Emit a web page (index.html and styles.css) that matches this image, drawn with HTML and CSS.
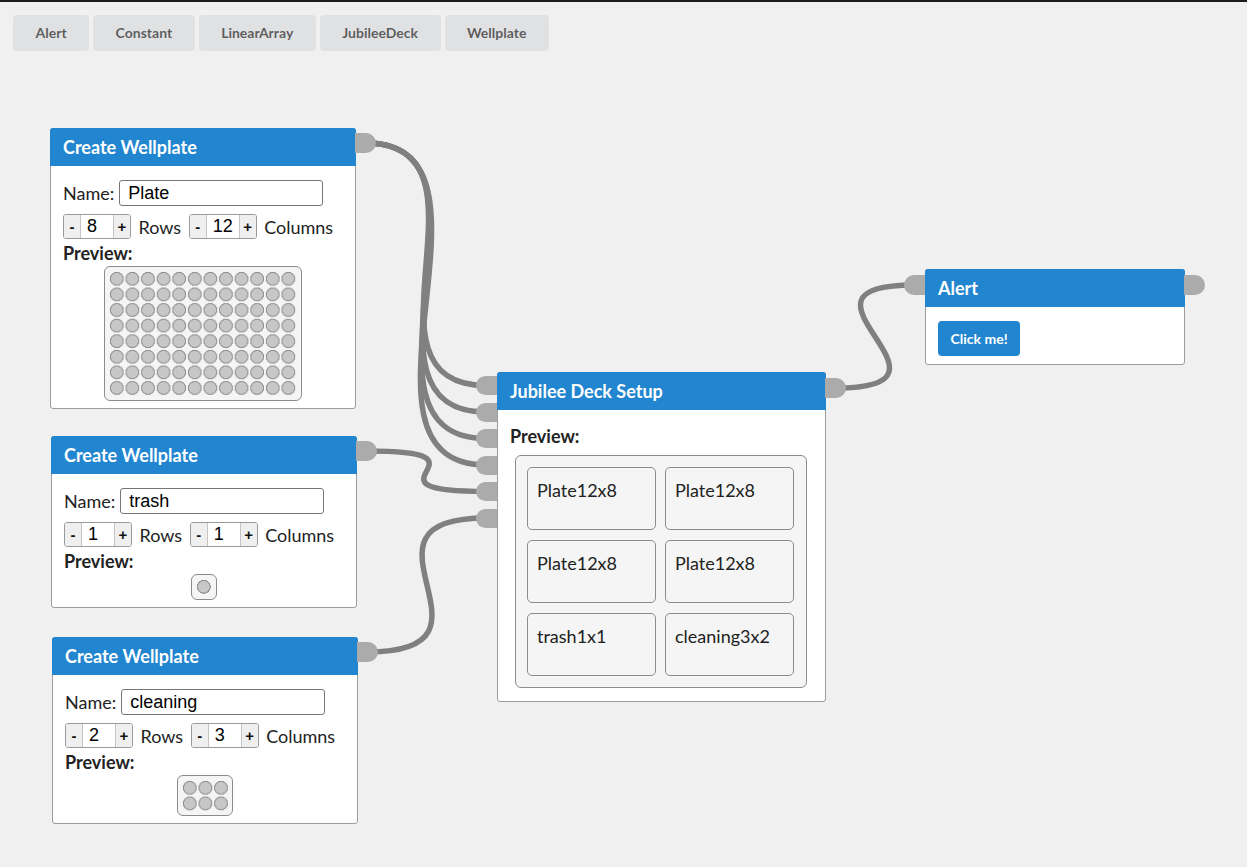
FILE: index.html
```html
<!DOCTYPE html>
<html lang="en">
<head>
<meta charset="utf-8">
<title>Node Editor</title>
<link rel="stylesheet" href="styles.css">
</head>
<body>
<div class="toolbar">
  <span class="tb-btn">Alert</span>
  <span class="tb-btn">Constant</span>
  <span class="tb-btn">LinearArray</span>
  <span class="tb-btn">JubileeDeck</span>
  <span class="tb-btn">Wellplate</span>
</div>

<div class="canvas">
  <svg class="links" width="1247" height="867" viewBox="0 0 1247 867">
    <g fill="none" stroke="#808080" stroke-width="5.5">
      <path d="M366 143 C506 143, 346 385.5, 486 385.5"/>
      <path d="M366 143 C511 143, 341 412, 486 412"/>
      <path d="M366 143 C516 143, 336 438.5, 486 438.5"/>
      <path d="M366 143 C521 143, 331 465, 486 465"/>
      <path d="M367 451 C507 451, 346 491.5, 486 491.5"/>
      <path d="M368 652 C518 652, 336 518, 486 518"/>
      <path d="M836 388 C981 388, 769 285, 914 285"/>
    </g>
  </svg>

  <div class="node wellplate n1">
    <div class="node-head">Create Wellplate</div>
    <div class="node-body">
      <div class="name-row"><span class="lbl">Name:</span><input class="txt" type="text" value="Plate"></div>
      <div class="dim-row">
        <span class="stepper"><span class="step">-</span><span class="val">8</span><span class="step">+</span></span>
        <span class="lbl">Rows</span>
        <span class="stepper"><span class="step">-</span><span class="val">12</span><span class="step">+</span></span>
        <span class="lbl">Columns</span>
      </div>
      <div class="pv-label">Preview:</div>
      <div class="plate-wrap"><div class="plate"><div class="wells w12x8"></div></div></div>
    </div>
    <span class="port out"></span>
  </div>

  <div class="node wellplate n2">
    <div class="node-head">Create Wellplate</div>
    <div class="node-body">
      <div class="name-row"><span class="lbl">Name:</span><input class="txt" type="text" value="trash"></div>
      <div class="dim-row">
        <span class="stepper"><span class="step">-</span><span class="val">1</span><span class="step">+</span></span>
        <span class="lbl">Rows</span>
        <span class="stepper"><span class="step">-</span><span class="val">1</span><span class="step">+</span></span>
        <span class="lbl">Columns</span>
      </div>
      <div class="pv-label">Preview:</div>
      <div class="plate-wrap"><div class="plate"><div class="wells w1x1"></div></div></div>
    </div>
    <span class="port out"></span>
  </div>

  <div class="node wellplate n3">
    <div class="node-head">Create Wellplate</div>
    <div class="node-body">
      <div class="name-row"><span class="lbl">Name:</span><input class="txt" type="text" value="cleaning"></div>
      <div class="dim-row">
        <span class="stepper"><span class="step">-</span><span class="val">2</span><span class="step">+</span></span>
        <span class="lbl">Rows</span>
        <span class="stepper"><span class="step">-</span><span class="val">3</span><span class="step">+</span></span>
        <span class="lbl">Columns</span>
      </div>
      <div class="pv-label">Preview:</div>
      <div class="plate-wrap"><div class="plate"><div class="wells w3x2"></div></div></div>
    </div>
    <span class="port out"></span>
  </div>

  <div class="node deck">
    <div class="node-head">Jubilee Deck Setup</div>
    <div class="node-body">
      <div class="pv-label">Preview:</div>
      <div class="deck-box">
        <div class="slot">Plate12x8</div>
        <div class="slot">Plate12x8</div>
        <div class="slot">Plate12x8</div>
        <div class="slot">Plate12x8</div>
        <div class="slot">trash1x1</div>
        <div class="slot">cleaning3x2</div>
      </div>
    </div>
    <div class="inputs">
      <span class="port in"></span>
      <span class="port in"></span>
      <span class="port in"></span>
      <span class="port in"></span>
      <span class="port in"></span>
      <span class="port in"></span>
    </div>
    <span class="port out"></span>
  </div>

  <div class="node alert">
    <div class="node-head">Alert</div>
    <div class="node-body">
      <span class="btn-primary">Click me!</span>
    </div>
    <span class="port in single"></span>
    <span class="port out"></span>
  </div>
</div>
</body>
</html>
```

FILE: styles.css
```css
html, body {
  margin: 0;
  padding: 0;
}

body {
  position: relative;
  width: 1247px;
  height: 867px;
  overflow: hidden;
  background: #f0f0f0;
  font-family: Lato, "Noto Sans", sans-serif;
  color: #222;
}

.toolbar {
  position: relative;
  z-index: 2;
  display: flex;
  gap: 4px;
  padding: 13px 13px 0;
  border-top: 2px solid #1c1c1c;
}

.tb-btn {
  display: inline-block;
  background: #e0e1e2;
  color: rgba(0, 0, 0, 0.6);
  font: 700 14px/14px Lato, sans-serif;
  padding: 11px 22.5px;
  border-radius: 4px;
}

.canvas {
  position: absolute;
  left: 0;
  top: 0;
  width: 1247px;
  height: 867px;
}

.links {
  position: absolute;
  left: 0;
  top: 0;
}

.node {
  position: absolute;
  box-sizing: border-box;
  background: #fff;
  border: 1px solid #9c9c9c;
  border-radius: 3px;
}

.n1 { left: 50px; top: 128px; width: 306px; }
.n2 { left: 51px; top: 436px; width: 306px; }
.n3 { left: 52px; top: 637px; width: 306px; }
.deck { left: 497px; top: 372px; width: 329px; }
.alert { left: 925px; top: 269px; width: 260px; }

.node-head {
  margin: -1px -1px 0;
  padding: 8px 12px 8px 13px;
  background: #2185d0;
  color: #fff;
  font: 700 18px/22px Lato, sans-serif;
  border-radius: 3px 3px 0 0;
}

.node-body {
  padding: 14px 12px 7px;
}

.lbl {
  font-size: 18px;
  line-height: 22px;
  color: #222;
}

.name-row {
  display: flex;
  align-items: center;
  gap: 5px;
  height: 26px;
}

.txt {
  box-sizing: border-box;
  width: 204px;
  height: 26px;
  margin: 0;
  padding: 0 8px;
  border: 1px solid #767676;
  border-radius: 3px;
  background: #fff;
  font: 18px "Liberation Sans", Arial, sans-serif;
  color: #000;
  outline: none;
}

.dim-row {
  display: flex;
  align-items: center;
  gap: 7.5px;
  height: 25px;
  margin-top: 8px;
}

.stepper {
  display: flex;
  box-sizing: border-box;
  height: 25px;
  border: 1px solid #9a9a9a;
  border-radius: 3px;
  overflow: hidden;
}

.step {
  width: 16px;
  background: #efefef;
  text-align: center;
  font: 700 15px/23px "Liberation Sans", Arial, sans-serif;
  color: #111;
}

.step:first-child { border-right: 1px solid #c4c4c4; }
.step:last-child { border-left: 1px solid #c4c4c4; }

.val {
  width: 32px;
  box-sizing: border-box;
  padding-left: 6px;
  background: #fff;
  font: 18px/23px "Liberation Sans", Arial, sans-serif;
  color: #000;
}

.pv-label {
  margin-top: 3px;
  font: 700 18px/22px Lato, sans-serif;
  color: #222;
}

.plate-wrap {
  display: flex;
  justify-content: center;
  margin-top: 2px;
}

.plate {
  padding: 4px;
  background: #f5f5f5;
  border: 1px solid #8c8c8c;
  border-radius: 6px;
}

.wells {
  background-image: radial-gradient(circle at center, #c7c7c7 0 5.6px, #8e8e8e 6px 6.7px, rgba(0, 0, 0, 0) 7.1px);
  background-size: 15.6px 15.6px;
}

.w12x8 { width: 187.2px; height: 124.8px; }
.w1x1 { width: 15.6px; height: 15.6px; }
.w3x2 { width: 46.8px; height: 31.2px; }

/* deck */
.deck .node-body {
  padding: 15px 12px 13px;
}

.deck .pv-label {
  margin-top: 0;
}

.deck-box {
  box-sizing: border-box;
  width: 292px;
  margin: 8px 0 0 5px;
  padding: 11px;
  display: grid;
  grid-template-columns: 129px 129px;
  grid-auto-rows: 63px;
  column-gap: 9px;
  row-gap: 10px;
  background: #f5f5f5;
  border: 1px solid #8c8c8c;
  border-radius: 6px;
}

.slot {
  box-sizing: border-box;
  padding: 11px 9px;
  background: #f5f5f5;
  border: 1px solid #8c8c8c;
  border-radius: 5px;
  font: 18px/22px Lato, sans-serif;
  color: #222;
}

/* alert */
.alert .node-body {
  padding-bottom: 8px;
}

.btn-primary {
  display: block;
  width: fit-content;
  padding: 10.5px 12.5px;
  background: #2185d0;
  color: #fff;
  font: 700 14px/14px Lato, sans-serif;
  border-radius: 4px;
}

/* ports */
.port {
  position: absolute;
  width: 21px;
  height: 20px;
  background: #ababab;
}

.port.out {
  right: -21px;
  top: 4px;
  border-radius: 0 10px 10px 0;
}

.deck .port.out {
  top: 5px;
}

.alert .port.out {
  top: 5px;
}

.inputs {
  position: absolute;
  left: -22px;
  top: 3px;
  display: flex;
  flex-direction: column;
  gap: 7.5px;
}

.inputs .port {
  position: static;
  display: block;
  height: 19px;
  border-radius: 10px 0 0 10px;
}

.port.in.single {
  left: -22px;
  top: 5px;
  border-radius: 10px 0 0 10px;
}
```
